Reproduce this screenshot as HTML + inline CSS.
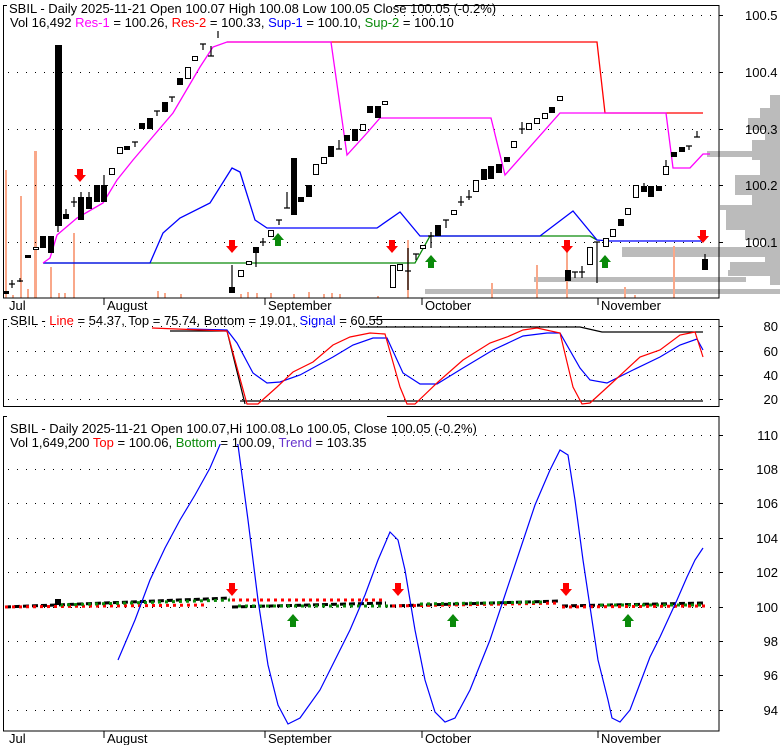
<!DOCTYPE html>
<html><head><meta charset="utf-8"><style>
html,body{margin:0;padding:0;background:#fff}
svg{display:block;font-family:"Liberation Sans",Arial,sans-serif;font-size:13px}
</style></head><body>
<svg width="780" height="745" viewBox="0 0 780 745" xmlns="http://www.w3.org/2000/svg">
<g fill="#bbb">
<rect x="622" y="247" width="158" height="10"/>
<rect x="534" y="277" width="212" height="5"/>
<rect x="425" y="289" width="355" height="5"/>
<rect x="707" y="151" width="73" height="6"/>
<path d="M780 95 L770 95 L770 108 L760 108 L760 118 L748 118 L748 130 L765 130 L765 140 L752 140 L752 160 L760 160 L760 175 L735 175 L735 195 L752 195 L752 205 L720 205 L720 210 L726 210 L726 230 L745 230 L745 240 L765 240 L765 262 L730 262 L730 270 L728 270 L728 276 L770 276 L770 285 L780 285 Z"/>
</g>
<g fill="#f9a88a">
<rect x="5" y="170" width="2" height="128"/><rect x="20" y="196" width="2" height="102"/><rect x="27" y="289" width="2" height="9"/><rect x="34" y="151" width="3" height="147"/><rect x="50" y="267" width="2" height="31"/><rect x="73" y="233" width="2" height="65"/><rect x="12" y="295" width="2" height="3"/><rect x="58" y="293" width="2" height="5"/><rect x="64" y="293" width="2" height="5"/><rect x="157" y="291" width="2" height="7"/><rect x="164" y="293" width="2" height="5"/><rect x="180" y="294" width="2" height="4"/><rect x="240" y="294" width="2" height="4"/><rect x="247" y="292" width="2" height="6"/><rect x="256" y="293" width="2" height="5"/><rect x="270" y="293" width="2" height="5"/><rect x="293" y="294" width="2" height="4"/><rect x="308" y="292" width="2" height="6"/><rect x="323" y="294" width="2" height="4"/><rect x="331" y="293" width="2" height="5"/><rect x="339" y="294" width="2" height="4"/><rect x="377" y="296" width="2" height="2"/><rect x="407" y="240" width="2" height="58"/><rect x="491" y="283" width="2" height="15"/><rect x="536" y="265" width="2" height="33"/><rect x="566" y="242" width="2" height="56"/><rect x="624" y="287" width="2" height="11"/><rect x="634" y="295" width="2" height="3"/><rect x="673" y="246" width="2" height="52"/>
</g>
<g stroke="#000" stroke-width="1" stroke-dasharray="1 8">
<line x1="8" y1="15.5" x2="719" y2="15.5"/><line x1="8" y1="72.5" x2="719" y2="72.5"/><line x1="8" y1="129.5" x2="719" y2="129.5"/><line x1="8" y1="185.5" x2="719" y2="185.5"/><line x1="8" y1="242.5" x2="719" y2="242.5"/>
</g>
<g fill="none" stroke-width="1.3">
<polyline stroke="#0a8a0a" points="43,263 415,263 430,236 590,236 597,240"/>
<polyline stroke="#00f" points="43,263 150,263 163,233 180,218 210,203 232,168 240,172 255,220 267,228 377,228 400,212 420,236 540,236 573,211 597,240 610,241 703,241"/>
<polyline stroke="#f00" points="227,42 597,42 605,113 703,113"/>
<polyline stroke="#f0f" points="43,263 50,258 57,235 77,218 103,203 117,180 133,160 150,140 173,113 200,67 213,47 227,42 331,42 347,155 367,133 380,118 491,118 505,175 560,113 666,113 673,168 690,168 703,154 710,154"/>
</g>
<g fill="#000">
<rect x="3" y="291" width="6" height="3"/><rect x="25" y="255" width="6" height="3"/><rect x="40" y="236" width="6" height="12"/><rect x="48" y="236" width="6" height="17"/><rect x="55" y="45" width="7" height="181"/><rect x="63" y="214" width="6" height="5"/><rect x="78" y="197" width="6" height="23"/><rect x="86" y="197" width="6" height="12"/><rect x="94" y="185" width="6" height="17"/><rect x="101" y="185" width="6" height="17"/><rect x="124" y="146" width="6" height="4"/><rect x="139" y="123" width="6" height="6"/><rect x="147" y="118" width="6" height="11"/><rect x="162" y="102" width="6" height="10"/><rect x="177" y="78" width="6" height="7"/><rect x="229" y="287" width="6" height="6"/><rect x="253" y="247" width="6" height="6"/><rect x="291" y="158" width="6" height="57"/><rect x="298" y="197" width="6" height="5"/><rect x="306" y="185" width="6" height="12"/><rect x="328" y="146" width="6" height="11"/><rect x="344" y="135" width="6" height="6"/><rect x="352" y="129" width="6" height="12"/><rect x="367" y="106" width="6" height="7"/><rect x="375" y="106" width="6" height="12"/><rect x="435" y="225" width="6" height="11"/><rect x="481" y="169" width="6" height="11"/><rect x="488" y="166" width="6" height="13"/><rect x="496" y="164" width="6" height="9"/><rect x="504" y="157" width="6" height="5"/><rect x="549" y="107" width="6" height="6"/><rect x="565" y="270" width="6" height="11"/><rect x="618" y="219" width="6" height="7"/><rect x="641" y="186" width="6" height="6"/><rect x="648" y="186" width="6" height="11"/><rect x="656" y="186" width="6" height="5"/><rect x="671" y="152" width="6" height="5"/><rect x="679" y="147" width="6" height="5"/><rect x="702" y="259" width="6" height="11"/>
</g>
<g fill="#fff" stroke="#000" stroke-width="1">
<rect x="33.5" y="247.5" width="5" height="2"/><rect x="109.5" y="168.5" width="5" height="6"/><rect x="117.5" y="147.5" width="5" height="6"/><rect x="185.5" y="67.5" width="5" height="11"/><rect x="192.5" y="56.5" width="5" height="4"/><rect x="238.5" y="270.5" width="5" height="6"/><rect x="246.5" y="261.5" width="5" height="3"/><rect x="268.5" y="230.5" width="5" height="6"/><rect x="313.5" y="164.5" width="5" height="10"/><rect x="321.5" y="157.5" width="5" height="6"/><rect x="360.5" y="124.5" width="5" height="6"/><rect x="382.5" y="101.5" width="5" height="3"/><rect x="390.5" y="265.5" width="5" height="22"/><rect x="397.5" y="264.5" width="5" height="6"/><rect x="420.5" y="245.5" width="5" height="3"/><rect x="451.5" y="210.5" width="5" height="4"/><rect x="473.5" y="180.5" width="5" height="11"/><rect x="511.5" y="141.5" width="5" height="6"/><rect x="526.5" y="123.5" width="5" height="6"/><rect x="534.5" y="118.5" width="5" height="5"/><rect x="542.5" y="113.5" width="5" height="5"/><rect x="557.5" y="96.5" width="5" height="4"/><rect x="587.5" y="247.5" width="5" height="17"/><rect x="603.5" y="238.5" width="5" height="8"/><rect x="610.5" y="229.5" width="5" height="7"/><rect x="625.5" y="208.5" width="5" height="6"/><rect x="633.5" y="185.5" width="5" height="12"/><rect x="663.5" y="166.5" width="5" height="8"/>
</g>
<g stroke="#000" stroke-width="1.2">
<path d="M9 284h6M12 280v8M17 281h6M20 278v4M71 202h6M74 197v10M81 192v5M89 192v5M104 175v10M132 142h6M135 142v5M154 111h6M157 111v5M169 97h6M172 97v5M200 44h6M203 44v6M208 56h6M211 46v10M218 28v10M58 226v6M66 209v5M232 265v22M256 253v14M260 242h6M263 238v8M276 220h6M279 220v5M284 208h6M287 192v16M336 149h6M339 140v9M405 271h6M408 248v42M413 254h6M416 254v6M428 236h6M431 232v16M443 220h6M446 220v8M458 202h6M461 196v10M466 197h6M469 190v10M519 129h6M522 122v12M572 272h6M575 272v6M579 272h6M582 266v12M594 242h6M597 242v41M686 146h6M689 146v4M694 137h6M697 131v6M705 254v5M666 160v6M644 183v3"/>
</g>
<g fill="#f00">
<path d="M77 169h6v6h3l-6 7-6-7h3z"/><path d="M229 240h6v6h3l-6 7-6-7h3z"/><path d="M389 240h6v6h3l-6 7-6-7h3z"/><path d="M564 240h6v6h3l-6 7-6-7h3z"/><path d="M700 230h6v6h3l-6 7-6-7h3z"/>
</g>
<g fill="#0a8a0a">
<path d="M275 246h6v-6h3l-6-7-6 7h3z"/><path d="M428 268h6v-6h3l-6-7-6 7h3z"/><path d="M602 268h6v-6h3l-6-7-6 7h3z"/>
</g>
<rect x="3.5" y="5.5" width="715.5" height="292.5" fill="none" stroke="#000"/>
<g stroke="#000"><path d="M719 15.5h4M719 72.5h4M719 129.5h4M719 185.5h4M719 242.5h4"/></g>
<rect x="7" y="0" width="388" height="31" fill="#fff"/>
<text x="9" y="13">SBIL - Daily 2025-11-21 Open 100.07  High 100.08  Low 100.05  Close 100.05 (-0.2%)</text>
<text x="10" y="27">Vol 16,492 <tspan fill="#f0f">Res-1</tspan> = 100.26, <tspan fill="#f00">Res-2</tspan> = 100.33, <tspan fill="#00f">Sup-1</tspan> = 100.10, <tspan fill="#0a8a0a">Sup-2</tspan> = 100.10</text>
<g><text x="745" y="20">100.5</text><text x="745" y="77">100.4</text><text x="745" y="134">100.3</text><text x="745" y="190">100.2</text><text x="745" y="247">100.1</text></g>
<g stroke="#000"><path d="M104 298v7M265 298v7M422 298v7M598 298v7"/></g>
<g><text x="9" y="310">Jul</text><text x="107" y="310">August</text><text x="268" y="310">September</text><text x="425" y="310">October</text><text x="601" y="310">November</text></g>
<g stroke="#000" stroke-dasharray="1 8"><line x1="8" y1="326.5" x2="719" y2="326.5"/><line x1="8" y1="351.5" x2="719" y2="351.5"/><line x1="8" y1="375.5" x2="719" y2="375.5"/><line x1="8" y1="399.5" x2="719" y2="399.5"/></g>
<g fill="none" stroke-width="1.2">
<polyline stroke="#000" points="360,327 580,327 602,332 703,332"/>
<polyline stroke="#000" points="240,401 703,401"/>
<polyline stroke="#000" points="170,331 227,331 245,404"/>
<polyline stroke="#00f" points="187,329 227,330 237,343 253,373 267,383 280,382 300,375 333,357 353,345 373,338 387,338 403,373 420,384 437,384 463,368 493,350 523,336 547,333 560,333 580,368 590,380 607,383 633,370 660,357 680,345 697,339 703,350"/>
<polyline stroke="#f00" points="152,328 227,331 247,404 258,404 277,387 293,372 313,362 333,345 350,337 370,333 385,334 400,387 407,404 415,404 438,382 463,360 490,343 507,337 523,330 537,328 560,333 573,387 582,404 590,403 613,382 640,357 660,350 680,335 695,332 703,357"/>
</g>
<rect x="3.5" y="319.5" width="715.5" height="87" fill="none" stroke="#000"/>
<rect x="7" y="312" width="366" height="14" fill="#fff"/>
<text x="10" y="325">SBIL - <tspan fill="#f00">Line</tspan> = 54.37, Top = 75.74, Bottom = 19.01, <tspan fill="#00f">Signal</tspan> = 60.55</text>
<g stroke="#000"><path d="M719 326.5h4M719 351.5h4M719 375.5h4M719 399.5h4"/></g>
<g text-anchor="end"><text x="778" y="331">80</text><text x="778" y="356">60</text><text x="778" y="380">40</text><text x="778" y="404">20</text></g>
<g stroke="#000" stroke-dasharray="1 8"><line x1="8" y1="435.5" x2="719" y2="435.5"/><line x1="8" y1="469.5" x2="719" y2="469.5"/><line x1="8" y1="503.5" x2="719" y2="503.5"/><line x1="8" y1="538.5" x2="719" y2="538.5"/><line x1="8" y1="572.5" x2="719" y2="572.5"/><line x1="8" y1="607.5" x2="719" y2="607.5"/><line x1="8" y1="641.5" x2="719" y2="641.5"/><line x1="8" y1="675.5" x2="719" y2="675.5"/><line x1="8" y1="710.5" x2="719" y2="710.5"/></g>
<g fill="none" stroke-width="3">
<line x1="5" y1="607" x2="230" y2="598" stroke="#000" stroke-dasharray="6 3"/>
<line x1="5" y1="607" x2="205" y2="605" stroke="#f00" stroke-dasharray="3 4"/>
<line x1="60" y1="605" x2="230" y2="600" stroke="#0a8a0a" stroke-dasharray="3 4"/>
<line x1="232" y1="600" x2="386" y2="600" stroke="#f00" stroke-dasharray="3 4"/>
<line x1="232" y1="607" x2="386" y2="603" stroke="#000" stroke-dasharray="6 3"/>
<line x1="238" y1="606" x2="390" y2="606" stroke="#0a8a0a" stroke-dasharray="3 4"/>
<line x1="390" y1="606" x2="560" y2="601" stroke="#000" stroke-dasharray="6 3"/>
<line x1="392" y1="606" x2="560" y2="603" stroke="#f00" stroke-dasharray="3 4"/>
<line x1="420" y1="604" x2="545" y2="602" stroke="#0a8a0a" stroke-dasharray="3 4"/>
<line x1="562" y1="606" x2="705" y2="603" stroke="#000" stroke-dasharray="6 3"/>
<line x1="562" y1="607" x2="705" y2="606" stroke="#f00" stroke-dasharray="3 4"/>
<line x1="600" y1="605" x2="705" y2="605" stroke="#0a8a0a" stroke-dasharray="3 4"/>
</g>
<rect x="55" y="599" width="6" height="6" fill="#000"/>
<polyline fill="none" stroke="#00f" stroke-width="1.2" points="118,660 135,620 150,580 165,548 180,520 195,495 210,468 222,440 230,426 238,445 248,520 258,600 268,665 278,705 288,724 300,718 320,690 335,660 350,630 365,595 378,560 390,532 398,540 405,570 415,630 425,680 435,712 445,722 455,718 470,690 490,640 505,595 520,550 535,505 550,470 560,450 568,455 575,500 583,560 592,620 598,660 608,700 612,718 620,722 630,710 650,657 660,637 677,600 687,577 695,560 703,548"/>
<g fill="#f00"><path d="M229 583h6v6h3l-6 7-6-7h3z"/><path d="M395 583h6v6h3l-6 7-6-7h3z"/><path d="M563 583h6v6h3l-6 7-6-7h3z"/></g>
<g fill="#0a8a0a"><path d="M290 627h6v-6h3l-6-7-6 7h3z"/><path d="M450 627h6v-6h3l-6-7-6 7h3z"/><path d="M625 627h6v-6h3l-6-7-6 7h3z"/></g>
<rect x="3.5" y="416.5" width="715.5" height="314.5" fill="none" stroke="#000"/>
<rect x="7" y="411" width="380" height="33" fill="#fff"/>
<text x="10" y="433">SBIL - Daily 2025-11-21 Open 100.07,Hi 100.08,Lo 100.05, Close 100.05 (-0.2%)</text>
<text x="10" y="447">Vol 1,649,200 <tspan fill="#f00">Top</tspan> = 100.06, <tspan fill="#0a8a0a">Bottom</tspan> = 100.09, <tspan fill="#6633cc">Trend</tspan> = 103.35</text>
<g stroke="#000"><path d="M719 435.5h4M719 469.5h4M719 503.5h4M719 538.5h4M719 572.5h4M719 607.5h4M719 641.5h4M719 675.5h4M719 710.5h4"/></g>
<g text-anchor="end"><text x="778" y="440">110</text><text x="778" y="474">108</text><text x="778" y="508">106</text><text x="778" y="543">104</text><text x="778" y="577">102</text><text x="778" y="612">100</text><text x="778" y="646">98</text><text x="778" y="680">96</text><text x="778" y="715">94</text></g>
<g stroke="#000"><path d="M104 731v7M265 731v7M422 731v7M598 731v7"/></g>
<g><text x="9" y="743">Jul</text><text x="107" y="743">August</text><text x="268" y="743">September</text><text x="425" y="743">October</text><text x="601" y="743">November</text></g>
</svg>
</body></html>
